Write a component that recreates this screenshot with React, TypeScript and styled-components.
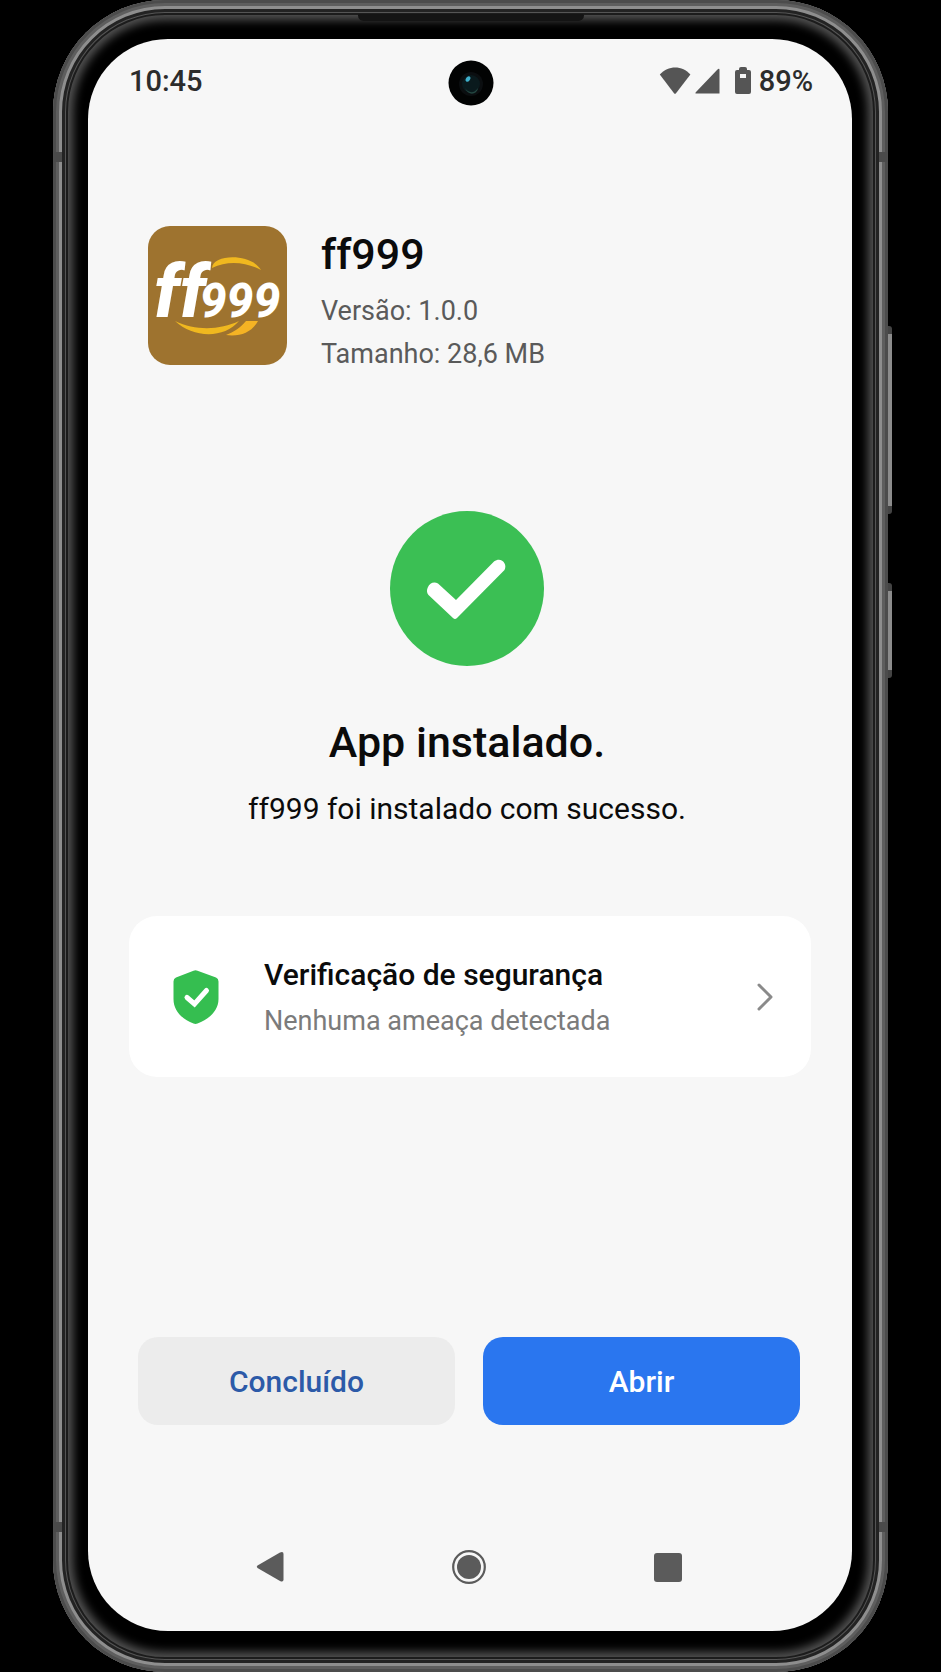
import React from "react";
import styled, { createGlobalStyle } from "styled-components";

const GlobalStyle = createGlobalStyle`
  *, *::before, *::after { box-sizing: border-box; }
  body {
    margin: 0;
    background: #000;
    color: #0b0b0b;
    font-family: Roboto, "Open Sans", sans-serif;
  }
  h1, h2, h3, p { margin: 0; }
  button { font: inherit; border: 0; padding: 0; cursor: pointer; }
`;

const Stage = styled.div`
  display: flex;
  min-height: 100vh;
  padding: 0 53px;
`;

const Phone = styled.div`
  position: relative;
  flex: 1;
  display: flex;
  min-width: 0;
  padding: 39px 36px 41px 35px;
  border-radius: 112px;
  background: #000;
  box-shadow:
    inset 0 0 0 3px #4c4c4c,
    inset 0 0 0 6px #5e5e5e,
    inset 0 0 0 9px #8e8e8e,
    inset 0 0 0 12px #232323,
    inset 0 0 0 13px #555,
    inset 0 0 0 15px #1c1c1c,
    inset 0 0 10px 20px #545454;
`;

const Speaker = styled.div`
  position: absolute;
  top: 14px;
  left: 50%;
  width: 226px;
  height: 7px;
  transform: translateX(-50%);
  border-radius: 2px 2px 8px 8px;
  background: #141414;
`;

const SideKey = styled.div<{ $top: number; $length: number }>`
  position: absolute;
  left: 100%;
  top: ${(p) => p.$top}px;
  width: 4px;
  height: ${(p) => p.$length}px;
  border: solid #444;
  border-width: 8px 0;
  border-radius: 0 3px 3px 0;
  background: #8c8c8c;
`;

const Antenna = styled.div<{ $side: "left" | "right"; $edge: "top" | "bottom" }>`
  position: absolute;
  ${(p) => p.$side}: 1px;
  ${(p) => p.$edge}: ${(p) => (p.$edge === "top" ? 152 : 140)}px;
  width: 8px;
  height: 10px;
  background: #4a4a4a;
`;

const Screen = styled.main`
  flex: 1;
  display: flex;
  flex-direction: column;
  min-width: 0;
  border-radius: 80px;
  background: #f7f7f7;
`;

const StatusBar = styled.header`
  display: grid;
  grid-template-columns: 1fr auto 1fr;
  align-items: center;
  height: 88px;
  padding: 0 39px 0 41px;
  color: #2c2c2c;
  font-size: 29px;
  font-weight: 500;
  line-height: 36px;
`;

const Clock = styled.time`
  padding-bottom: 4px;
`;

const Camera = styled.div`
  display: flex;
  svg { display: block; }
`;

const StatusIcons = styled.div`
  display: flex;
  align-items: center;
  justify-content: flex-end;
  gap: 8px;
  padding-bottom: 4px;
`;

const AppInfo = styled.section`
  display: flex;
  align-items: flex-start;
  gap: 34px;
  margin-top: 99px;
  padding: 0 60px;
`;

const AppLogo = styled.svg`
  flex: none;
  display: block;
  border-radius: 22px;
`;

const AppDetails = styled.div`
  padding-top: 4px;
`;

const AppName = styled.h1`
  margin-bottom: 12px;
  font-size: 43px;
  font-weight: 500;
  line-height: 48px;
`;

const Meta = styled.p`
  color: #5a5a5a;
  font-size: 27px;
  line-height: 43px;
`;

const Result = styled.section`
  display: flex;
  flex-direction: column;
  align-items: center;
  margin-top: 135px;
  padding-right: 6px;
  text-align: center;
`;

const ResultTitle = styled.h2`
  margin-top: 52px;
  font-size: 43px;
  font-weight: 500;
  line-height: 48px;
`;

const ResultText = styled.p`
  margin-top: 25px;
  font-size: 30px;
  line-height: 36px;
`;

const SecurityCard = styled.button`
  display: flex;
  align-items: center;
  height: 161px;
  margin: 89px 41px 0;
  padding: 0 36px 0 44px;
  border-radius: 28px;
  background: #fff;
  color: inherit;
  text-align: left;
`;

const CardText = styled.span`
  flex: 1;
  display: flex;
  flex-direction: column;
  margin-left: 45px;
  padding-top: 2px;
  line-height: 46px;
`;

const CardTitle = styled.span`
  font-size: 30px;
  font-weight: 500;
`;

const CardNote = styled.span`
  color: #7b7b7b;
  font-size: 27px;
`;

const Actions = styled.div`
  display: grid;
  grid-template-columns: 1fr 1fr;
  gap: 28px;
  margin-top: auto;
  padding: 48px 52px 0 50px;
`;

const Action = styled.button<{ $primary?: boolean }>`
  && {
    height: 88px;
    border-radius: 20px;
    background: ${(p) => (p.$primary ? "#2a76ef" : "#ececec")};
    color: ${(p) => (p.$primary ? "#fff" : "#2c5aa8")};
    font-size: 30px;
    font-weight: 500;
  }
`;

const NavBar = styled.nav`
  display: grid;
  grid-template-columns: repeat(3, 1fr);
  margin-top: 110px;
  padding: 0 85px 32px 82px;
`;

const NavButton = styled.button`
  display: flex;
  align-items: center;
  justify-content: center;
  height: 64px;
  background: none;
`;

export default function App() {
  return (
    <>
      <GlobalStyle />
      <Stage>
        <Phone>
          <Speaker />
          <SideKey $top={326} $length={188} />
          <SideKey $top={583} $length={95} />
          <Antenna $side="left" $edge="top" />
          <Antenna $side="right" $edge="top" />
          <Antenna $side="left" $edge="bottom" />
          <Antenna $side="right" $edge="bottom" />
          <Screen>
            <StatusBar>
              <Clock>10:45</Clock>
              <Camera>
                <svg width="46" height="46" viewBox="0 0 46 46" aria-hidden="true">
                  <circle cx="23" cy="23" r="22.500" fill="#020303" />
                  <circle cx="23" cy="24" r="12" fill="#0b0e10" />
                  <circle cx="23" cy="24" r="9" fill="#0a1a1d" />
                  <path d="M17 28c3 5 9 6 13 0c-1 7-10 8-13 0Z" fill="#244741" />
                  <ellipse cx="20" cy="19" rx="2" ry="3" transform="rotate(35 20 19)" fill="#3fb0cc" />
                </svg>
              </Camera>
              <StatusIcons>
                <svg width="92" height="30" viewBox="0 0 92 30" fill="#555" aria-hidden="true">
                  <path d="M.8 8.600C9-.8 23.500-.8 31.400 8.600L17 27.200q-1 1.200-2 0Z" />
                  <path d="M60.500 4v23.500H37.500q-2 0-.5-1.500L58 4Q60.500 1.500 60.500 4Z" />
                  <path d="M80 4V3q0-2 2-2h4q2 0 2 2v1h2q2 0 2 2v20q0 2-2 2H78q-2 0-2-2V6q0-2 2-2Z" />
                  <rect x="81" y="8" width="6" height="4" fill="#f4f4f4" />
                </svg>
                <span>89%</span>
              </StatusIcons>
            </StatusBar>

            <AppInfo>
              <AppLogo width="139" height="139" viewBox="0 0 139 139" role="img" aria-label="ff999">
                <rect width="139" height="139" fill="#9e732f" />
                <path d="M64 42C65 28 103 27 113 44C98 36 80 34 64 42Z" fill="#f0b81f" />
                <path d="M27 95C48 105 72 104 91 95C76 113 45 112 27 95Z" fill="#f0b81f" />
                <path d="M98 95H110C104 106 92 111 78 109C86 106 92 102 98 95Z" fill="#f5b324" />
                <text
                  x="6"
                  y="91"
                  fill="#fff"
                  fontFamily="Roboto, sans-serif"
                  fontStyle="italic"
                  fontWeight="800"
                  fontSize="74"
                >
                  ff<tspan dx="-6" fontSize="48">999</tspan>
                </text>
              </AppLogo>
              <AppDetails>
                <AppName>ff999</AppName>
                <Meta>Versão: 1.0.0</Meta>
                <Meta>Tamanho: 28,6 MB</Meta>
              </AppDetails>
            </AppInfo>

            <Result>
              <svg width="154" height="155" viewBox="0 0 154 155" aria-hidden="true">
                <ellipse cx="77" cy="77.500" rx="77" ry="77.500" fill="#3bbf54" />
                <path
                  d="M38.500 84C34 79 40.500 68 48 72.500L66 89L104 50.500C111 45 118 53 114.500 59L67 107q-2 2-4 0Z"
                  fill="#fff"
                />
              </svg>
              <ResultTitle>App instalado.</ResultTitle>
              <ResultText>ff999 foi instalado com sucesso.</ResultText>
            </Result>

            <SecurityCard type="button">
              <svg width="46" height="54" viewBox="0 0 46 54" aria-hidden="true">
                <path
                  d="M20.500.7q2-1 4 0L43 7.500q2.500 1 2.500 4V29C45.500 41 36 49 24.500 53.500q-2 .8-4 0C9 49 .5 41 .5 29V11.500q0-3 2.500-4Z"
                  fill="#35be50"
                />
                <path d="M14 27.500L21.500 34L33.500 20.500" fill="none" stroke="#fff" strokeWidth="5" strokeLinecap="round" />
              </svg>
              <CardText>
                <CardTitle>Verificação de segurança</CardTitle>
                <CardNote>Nenhuma ameaça detectada</CardNote>
              </CardText>
              <svg width="20" height="28" viewBox="0 0 20 28" fill="none" stroke="#8a8a8a" strokeWidth="3" aria-hidden="true">
                <path d="M4 2L16 14L4 26" strokeLinecap="round" strokeLinejoin="round" />
              </svg>
            </SecurityCard>

            <Actions>
              <Action type="button">Concluído</Action>
              <Action type="button" $primary>Abrir</Action>
            </Actions>

            <NavBar>
              <NavButton type="button" aria-label="Voltar">
                <svg width="28" height="32" viewBox="0 0 28 32" fill="#5b5b5b">
                  <path d="M1.500 14.500L24 1.500Q27.500 0 27.500 3V28.500Q27.500 31.500 24 30L1.500 17Q0 15.700 1.500 14.500Z" />
                </svg>
              </NavButton>
              <NavButton type="button" aria-label="Início">
                <svg width="34" height="34" viewBox="0 0 34 34" fill="#5b5b5b">
                  <circle cx="17" cy="17" r="12" />
                  <circle cx="17" cy="17" r="15.800" fill="none" stroke="#5b5b5b" strokeWidth="2.200" />
                </svg>
              </NavButton>
              <NavButton type="button" aria-label="Recentes">
                <svg width="28" height="29" viewBox="0 0 28 29" fill="#5b5b5b">
                  <rect width="28" height="29" rx="3" />
                </svg>
              </NavButton>
            </NavBar>
          </Screen>
        </Phone>
      </Stage>
    </>
  );
}
